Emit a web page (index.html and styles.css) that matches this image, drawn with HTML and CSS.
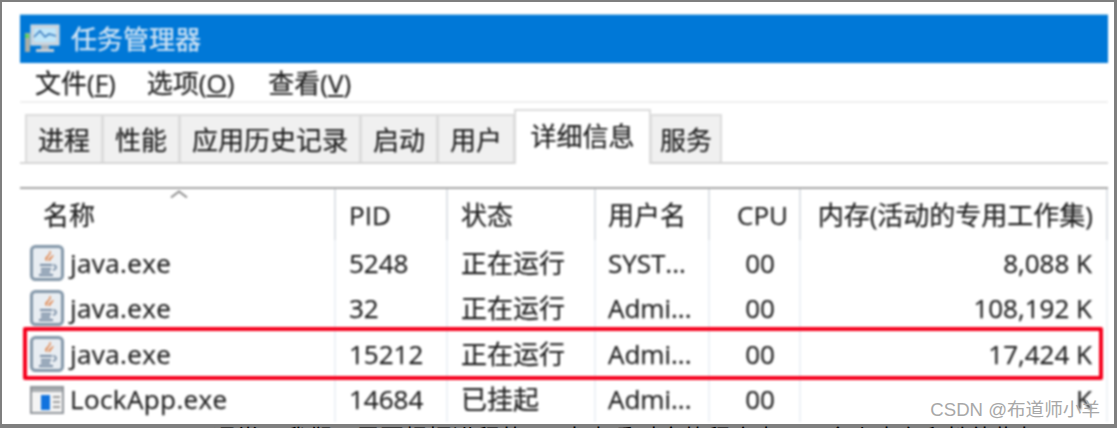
FILE: index.html
```html
<!DOCTYPE html>
<html lang="zh">
<head>
<meta charset="utf-8">
<title>任务管理器</title>
<link rel="stylesheet" href="styles.css">
</head>
<body>
<div class="frame">
  <div class="shot">
    <div class="titlebar">
      <svg class="app-icon" viewBox="0 0 36 30" width="36" height="30">
        <rect x="7" y="1" width="28" height="20" fill="#c9d3dc" stroke="#dfe5ea"/>
        <rect x="10" y="4" width="22" height="14" fill="#bfe6fa"/>
        <path d="M10 13l6-6 5 6 4-3 7 2" fill="none" stroke="#3f7fc0" stroke-width="1.6"/>
        <rect x="17" y="21" width="8" height="4" fill="#a9b4bd"/>
        <rect x="12" y="25" width="18" height="3" fill="#c9d0d6"/>
        <rect x="1" y="9" width="5" height="19" fill="#a9aea6"/>
        <rect x="1" y="10" width="4" height="4" fill="#5fd05f"/>
      </svg>
      <span class="title-text">任务管理器</span>
    </div>
    <div class="menubar">
      <span>文件(<u>F</u>)</span>
      <span>选项(<u>O</u>)</span>
      <span class="menu-last">查看(<u>V</u>)</span>
    </div>
    <div class="tabs">
      <span class="tab tab-w1">进程</span>
      <span class="tab tab-w2">性能</span>
      <span class="tab tab-w3">应用历史记录</span>
      <span class="tab tab-w4">启动</span>
      <span class="tab tab-w5">用户</span>
      <span class="tab tab-active">详细信息</span>
      <span class="tab tab-w6">服务</span>
    </div>
    <div class="table">
      <div class="sort-row"><svg class="sort" viewBox="0 0 18 8" width="18" height="8"><path d="M1 7.5l8-6 8 6" fill="none" stroke="#8d8d8d" stroke-width="2"/></svg></div>
      <div class="row head">
        <div class="cell c-name"><span class="head-name">名称</span></div>
        <div class="cell c-pid">PID</div>
        <div class="cell c-state">状态</div>
        <div class="cell c-user">用户名</div>
        <div class="cell c-cpu">CPU</div>
        <div class="cell c-mem head-mem">内存(活动的专用工作集)</div>
      </div>
      <div class="row">
        <div class="cell c-name"><svg class="proc-icon" viewBox="0 0 34 36" width="34" height="36"><use href="#java"/></svg>java.exe</div>
        <div class="cell c-pid">5248</div>
        <div class="cell c-state">正在运行</div>
        <div class="cell c-user">SYST...</div>
        <div class="cell c-cpu">00</div>
        <div class="cell c-mem">8,088 K</div>
      </div>
      <div class="row">
        <div class="cell c-name"><svg class="proc-icon" viewBox="0 0 34 36" width="34" height="36"><use href="#java"/></svg>java.exe</div>
        <div class="cell c-pid">32</div>
        <div class="cell c-state">正在运行</div>
        <div class="cell c-user">Admi...</div>
        <div class="cell c-cpu">00</div>
        <div class="cell c-mem">108,192 K</div>
      </div>
      <div class="row marked">
        <div class="cell c-name"><svg class="proc-icon" viewBox="0 0 34 36" width="34" height="36"><use href="#java"/></svg>java.exe</div>
        <div class="cell c-pid">15212</div>
        <div class="cell c-state">正在运行</div>
        <div class="cell c-user">Admi...</div>
        <div class="cell c-cpu">00</div>
        <div class="cell c-mem">17,424 K</div>
        <div class="redbox"></div>
      </div>
      <div class="row">
        <div class="cell c-name"><svg class="proc-icon lock" viewBox="0 0 34 28" width="34" height="28">
          <rect x="1" y="1" width="32" height="26" fill="#f4f4f4" stroke="#8f9499" stroke-width="2"/>
          <rect x="2" y="2" width="30" height="4" fill="#a9adb1"/>
          <rect x="11" y="9" width="9" height="15" fill="#1273de"/>
          <path d="M23 11h7M23 16h7M23 21h7" stroke="#9a9a9a" stroke-width="2"/>
        </svg>LockApp.exe</div>
        <div class="cell c-pid">14684</div>
        <div class="cell c-state">已挂起</div>
        <div class="cell c-user">Admi...</div>
        <div class="cell c-cpu">00</div>
        <div class="cell c-mem">K</div>
      </div>
    </div>
  </div>
  <div class="cut-strip"><span class="cut-text">通常，我们只需要根据进程的PID来查看对应的程序占用了多少内存和性能指标即可，例如</span></div>
  <div class="watermark">CSDN @布道师小羊</div>
</div>
<svg class="defs" width="0" height="0">
  <defs>
    <symbol id="java" viewBox="0 0 34 36">
      <rect x="1.5" y="1.5" width="31" height="33" rx="4" fill="#e8edf2" stroke="#8296a8" stroke-width="3"/>
      <path d="M20 6c2 4-5 6-3 10-5-3 4-6 3-10zM23 10c0 3-4 4-3 6-4-2 3-4 3-6z" fill="#e0702a" stroke="#e0702a" stroke-width=".6"/>
      <path d="M10 20h12M11 24h10M11 27h9M9 30h14" stroke="#7388a0" stroke-width="2"/>
      <path d="M23 20c4 0 4 4 0 5" fill="none" stroke="#7388a0" stroke-width="1.6"/>
    </symbol>
  </defs>
</svg>
</body>
</html>
```
FILE: styles.css
```css
* { box-sizing: border-box; }
html, body { margin: 0; padding: 0; }
body { width: 1117px; height: 428px; overflow: hidden; background: #fff; font-family: "Open Sans", "Noto Sans CJK SC", sans-serif; color: #1f1f1f; }
.frame { position: relative; display: flex; flex-direction: column; width: 1117px; height: 428px; background: #fff; border: solid #7f7f7f; border-width: 2px 3px 0 2px; overflow: hidden; }
.shot { flex: 1; min-height: 0; padding: 12px 6px 0 18px; filter: blur(0.9px); -webkit-text-stroke: 0.25px currentColor; }
.titlebar { height: 49px; background: #0078d7; display: flex; align-items: center; padding-left: 4px; gap: 11px; border-top: 1px solid #9fd0ea; }
.app-icon { flex: none; }
.title-text { font-size: 26px; color: #d5e6f5; line-height: 1; }
.menubar { height: 40px; display: flex; align-items: center; gap: 31px; padding: 2px 0 0 15px; font-size: 26px; line-height: 1; border-bottom: 2px solid #efefef; }
.menu-last { margin-left: 3px; }
.tabs { display: flex; align-items: flex-end; height: 61px; border-bottom: 2px solid #d4d4d4; padding-left: 5px; margin-bottom: 23px; }
.tab { height: 48px; display: flex; align-items: center; justify-content: center; background: #f0f0f0; border: 2px solid #dcdcdc; border-bottom: 0; font-size: 26px; margin-right: -1px; }
.tab-w1 { width: 78px; }
.tab-w2 { width: 78px; }
.tab-w3 { width: 182px; }
.tab-w4 { width: 78px; }
.tab-w5 { width: 78px; }
.tab-w6 { width: 72px; }
.tab-active { width: 137px; height: 55px; background: #fff; margin-bottom: -2px; padding-bottom: 6px; }
.table { border-top: 2px solid #a5a5a5; position: relative; }
.sort-row { height: 0; position: relative; }
.sort { position: absolute; left: 150px; top: 1px; }
.row { display: flex; height: 45.5px; align-items: center; font-size: 26px; line-height: 1; white-space: nowrap; position: relative; }
.row.head { height: 51px; }
.cell { height: 100%; display: flex; align-items: center; border-right: 2px solid #eef2f7; }
.head .cell { border-right-color: #dfe3e8; }
.c-name { width: 316px; padding-left: 10px; letter-spacing: 0.4px; }
.head-name { padding-left: 13px; letter-spacing: 0; }
.c-pid { width: 112px; padding-left: 13px; }
.c-state { width: 148px; padding-left: 13px; }
.c-user { width: 114px; padding-left: 12px; }
.c-cpu { width: 91px; justify-content: center; padding-left: 11px; }
.head .c-cpu { padding-left: 16px; }
.c-mem { width: 307px; justify-content: flex-end; padding-right: 14px; border-right: 2px solid #f0f3f7; }
.head-mem { padding-right: 13px; }
.proc-icon { flex: none; margin-right: 6px; }
.lock { margin-top: 2px; }
.redbox { position: absolute; z-index: 2; left: 3px; right: 5px; top: -4px; bottom: -3.5px; border: 4px solid #f5001c; border-radius: 2px; }
.cut-strip { flex: none; height: 4px; background: #7f7f7f; padding-left: 210px; overflow: hidden; font-size: 24px; line-height: 27px; color: #000; white-space: nowrap; }
.watermark { position: absolute; z-index: 3; right: 14px; bottom: 8px; font-size: 18.6px; line-height: 1; color: #a8a8a8; font-family: "Liberation Sans", "Noto Sans CJK SC", sans-serif; }
.defs { position: absolute; }
```
